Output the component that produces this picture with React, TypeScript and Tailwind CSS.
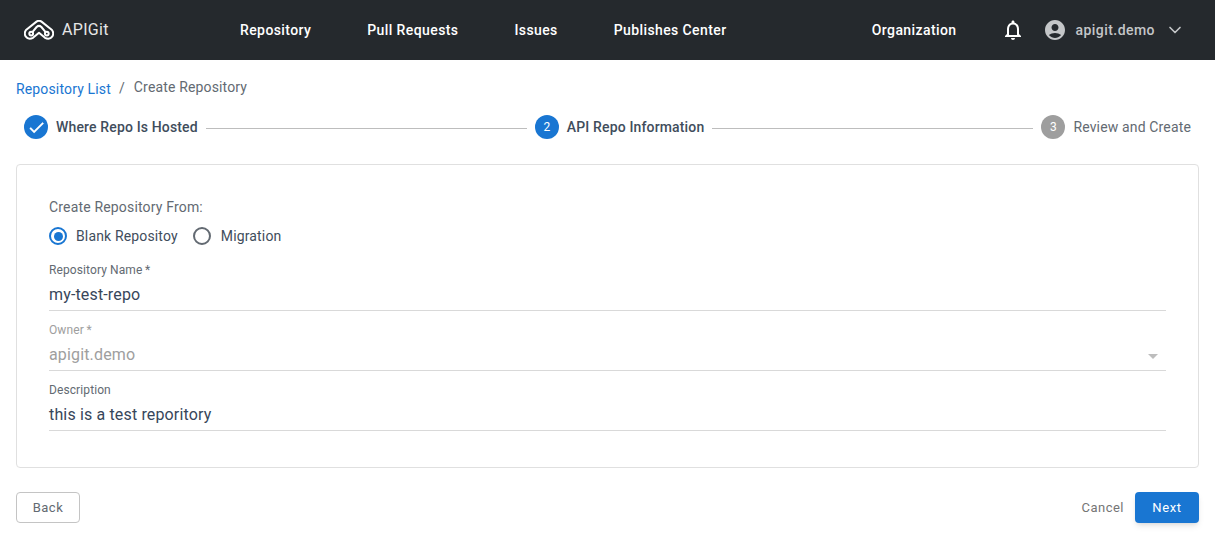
import { ChevronDown } from 'lucide-react'

function Logo() {
  return (
    <svg width="30" height="20" viewBox="0 0 30 20" fill="none" stroke="white" strokeWidth="2" strokeLinejoin="round" strokeLinecap="round">
      <path d="M12.5 1.6 Q15 0 17.5 1.6 L28 10 Q30.2 13 28.4 16.4 Q25.5 20.2 21 17.8 L15 12.8 L9 17.8 Q4.5 20.2 1.6 16.4 Q-0.2 13 2 10 Z" />
      <path d="M8.6 11.8 L12.6 7 Q15 4.8 17.4 7 L21.4 11.8" />
      <circle cx="7.2" cy="13.6" r="1.9" />
      <circle cx="22.8" cy="13.6" r="1.9" />
    </svg>
  )
}

function Bell() {
  return (
    <svg width="24" height="24" viewBox="0 0 24 24" fill="white">
      <path d="M12 22c1.1 0 2-.9 2-2h-4c0 1.1.9 2 2 2zm6-6v-5c0-3.07-1.63-5.64-4.5-6.32V4c0-.83-.67-1.5-1.5-1.5s-1.5.67-1.5 1.5v.68C7.64 5.36 6 7.92 6 11v5l-2 2v1h16v-1l-2-2zm-2 1H8v-6c0-2.48 1.51-4.5 4-4.5s4 2.02 4 4.5v6z" />
    </svg>
  )
}

function Account() {
  return (
    <svg width="24" height="24" viewBox="0 0 24 24" fill="#c4c6c8">
      <path d="M12 2C6.48 2 2 6.48 2 12s4.48 10 10 10 10-4.48 10-10S17.52 2 12 2zm0 4c1.93 0 3.5 1.57 3.5 3.5S13.93 13 12 13s-3.5-1.57-3.5-3.5S10.07 6 12 6zm0 14c-2.03 0-4.43-.82-6.14-2.88C7.55 15.8 9.68 15 12 15s4.45.8 6.14 2.12C16.43 19.18 14.03 20 12 20z" />
    </svg>
  )
}

function Step({ n, label, active, done }: { n: string; label: string; active?: boolean; done?: boolean }) {
  return (
    <div className="flex items-center">
      <div className={'w-6 h-6 rounded-full flex items-center justify-center text-xs text-white ' + (active || done ? 'bg-[#1976d2]' : 'bg-[#9e9e9e]')}>
        {done ? (
          <svg width="19" height="19" viewBox="0 0 24 24" fill="white" stroke="white" strokeWidth="0.6">
            <path d="M9 16.17 4.83 12l-1.42 1.41L9 19 21 7l-1.41-1.41z" />
          </svg>
        ) : (
          n
        )}
      </div>
      <span className={'ml-2 text-sm tracking-[0.15px] ' + (active || done ? 'font-medium text-[#3f4d5c]' : 'text-[#636a72]')}>{label}</span>
    </div>
  )
}

function Field({ label, value, disabled, select }: { label: string; value: string; disabled?: boolean; select?: boolean }) {
  return (
    <div className="h-[60px] flex flex-col">
      <label className={'text-xs leading-4 mt-[1px] tracking-[0.1px] ' + (disabled ? 'text-[#9e9e9e]' : 'text-[#636a72]')}>{label}</label>
      <div className="h-[33px] pt-[1px] flex items-center justify-between border-b border-[#d9d9d9]">
        <span className={'text-base tracking-[0.15px] ' + (disabled ? 'text-[#9e9e9e]' : 'text-[#37465a]')}>{value}</span>
        {select && <div className="mr-[8px] mt-[3px] w-0 h-0 border-x-[5px] border-x-transparent border-t-[5px] border-t-[#bdbdbd]" />}
      </div>
    </div>
  )
}

export default function App() {
  return (
    <div className="w-[1215px] h-[545px] bg-white overflow-hidden font-['Roboto',sans-serif]">
      <header className="h-[60px] bg-[#25292d] flex items-center text-white">
        <div className="flex items-center pl-[24px] w-[240px]">
          <Logo />
          <span className="ml-[8px] text-base tracking-[0.3px] text-[#e6e6e6]">APIGit</span>
        </div>
        <nav className="flex items-center gap-[56px] text-sm font-medium tracking-[0.4px]">
          <span>Repository</span>
          <span>Pull Requests</span>
          <span>Issues</span>
          <span>Publishes Center</span>
        </nav>
        <div className="ml-auto flex items-center">
          <span className="text-sm font-medium tracking-[0.4px]">Organization</span>
          <div className="ml-[45px]"><Bell /></div>
          <div className="ml-[18px]"><Account /></div>
          <span className="ml-[8px] text-sm font-medium tracking-[0.45px] text-[#c4c6c8]">apigit.demo</span>
          <ChevronDown className="ml-[10px] mr-[30px] text-[#c4c6c8]" size={20} strokeWidth={2} />
        </div>
      </header>

      <main className="px-4">
        <div className="flex items-center mt-[18px] h-5 text-sm tracking-[0.15px]">
          <span className="text-[#1976d2] mt-[1px]">Repository List</span>
          <span className="ml-2 mr-[9px] text-[#636a72]">/</span>
          <span className="text-[#636a72] mb-[3px]">Create Repository</span>
        </div>

        <div className="flex items-center px-2 h-6 mt-[17px]">
          <Step n="1" label="Where Repo Is Hosted" done />
          <div className="flex-1 h-px mt-[2px] bg-[#bdbdbd] mx-2" />
          <Step n="2" label="API Repo Information" active />
          <div className="flex-1 h-px mt-[2px] bg-[#bdbdbd] mx-2" />
          <Step n="3" label="Review and Create" />
        </div>

        <section className="mt-[25px] h-[304px] border border-[#e0e0e0] rounded px-8 pt-[32px]">
          <div className="text-sm tracking-[0.17px] text-[#636a72] leading-5">Create Repository From:</div>
          <div className="flex items-center mt-[7px] h-6 text-sm tracking-[0.15px] text-[#3f4d5c]">
            <span className="w-[18px] h-[18px] rounded-full border-2 border-[#1976d2] flex items-center justify-center">
              <span className="w-[9px] h-[9px] rounded-full bg-[#1976d2]" />
            </span>
            <span className="ml-[9px]">Blank Repositoy</span>
            <span className="ml-[15px] w-[18px] h-[18px] rounded-full border-2 border-[#636a72]" />
            <span className="ml-[10px]">Migration</span>
          </div>
          <div className="mt-[13px]">
            <Field label={'Repository Name\u2009*'} value="my-test-repo" />
            <Field label={'Owner\u2009*'} value="apigit.demo" disabled select />
            <Field label="Description" value="this is a test reporitory" />
          </div>
        </section>

        <div className="flex items-center justify-between mt-[24px]">
          <button className="w-[64px] h-[31px] border border-[#c4c4c4] rounded text-[13px] tracking-[0.5px] text-[#636a72]">Back</button>
          <div className="flex items-center">
            <span className="text-[13px] tracking-[0.5px] text-[#757575] mr-[11px]">Cancel</span>
            <button className="w-[64px] h-[31px] rounded bg-[#1976d2] text-white text-[13px] tracking-[0.6px] shadow-md">Next</button>
          </div>
        </div>
      </main>
    </div>
  )
}
